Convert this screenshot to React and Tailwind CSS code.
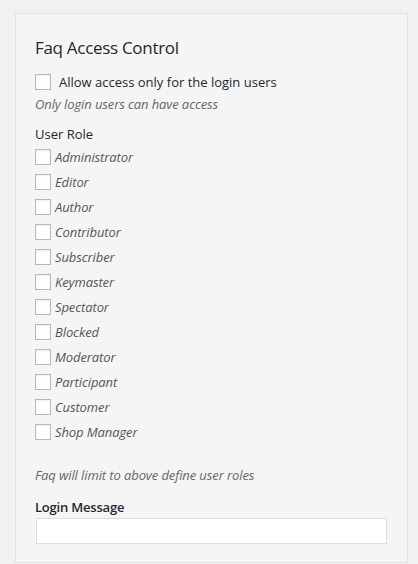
import React from "react";

const roles = ["Administrator","Editor","Author","Contributor","Subscriber","Keymaster","Spectator","Blocked","Moderator","Participant","Customer","Shop Manager"];

export default function App() {
  return (
    <div className="w-[418px] h-[564px] bg-[#f1f1f1] pt-[13px] pl-[15px] pr-[10px] overflow-hidden" style={{fontFamily: '"Open Sans", "Noto Sans", sans-serif'}}>
      <div className="h-[550px] bg-[#f6f5f5] border border-[#e2e2e2] pl-[19px] pr-[21px] pt-[21px] text-[#32373c]">
        <h2 className="text-[17px] leading-[26px] font-medium text-[#23282d] tracking-[-0.3px]">Faq Access Control</h2>
        <label className="flex items-center mt-[13px] h-[16px]">
          <span className="w-[16px] h-[16px] border border-[#b4b9be] bg-white shadow-[inset_0_1px_2px_rgba(0,0,0,0.07)]" />
          <span className="ml-[8px] text-[13px] leading-[16px] text-[#23282d] tracking-[0px]">Allow access only for the login users</span>
        </label>
        <p className="mt-[4px] text-[13px] leading-[20px] italic text-[#666] tracking-[-0.1px]">Only login users can have access</p>
        <p className="mt-[11px] text-[13px] leading-[18px] text-[#23282d]">User Role</p>
        <div className="flex flex-col mt-[1px]">
          {roles.map((r) => (
            <label key={r} className="flex items-center h-[25px]">
              <span className="w-[16px] h-[16px] border border-[#b4b9be] bg-white shadow-[inset_0_1px_2px_rgba(0,0,0,0.07)]" />
              <span className="ml-[4px] text-[13px] leading-[16px] italic text-[#555] tracking-[-0.1px]">{r}</span>
            </label>
          ))}
        </div>
        <p className="mt-[22px] text-[13px] leading-[18px] italic text-[#666] tracking-[-0.1px]">Faq will limit to above define user roles</p>
        <p className="mt-[14px] text-[13px] leading-[18px] font-semibold text-[#23282d] tracking-[-0.2px]">Login Message</p>
        <div className="mt-[2px] ml-[1px] w-[351px] h-[26px] bg-white border border-[#dddddd]" />
      </div>
    </div>
  );
}
